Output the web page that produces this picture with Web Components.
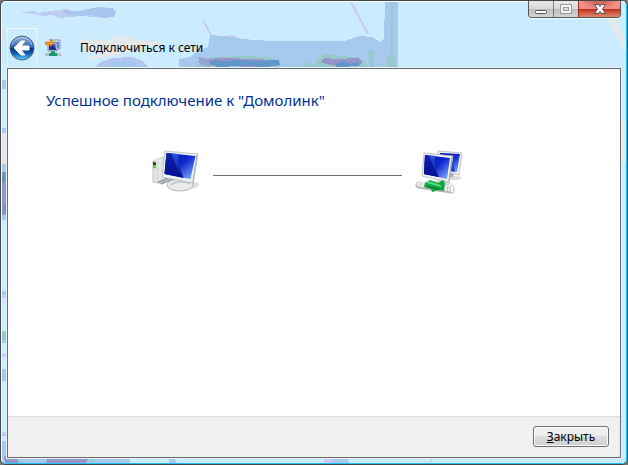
<!DOCTYPE html>
<html lang="ru">
<head>
<meta charset="utf-8">
<title>Подключиться к сети</title>
<style>
	body {
		margin: 0;
		background: #777;
		font-family: "Noto Sans", "Open Sans", sans-serif;
		font-size: 12px;
		color: #000;
	}
</style>
</head>
<body>
<aero-window>
	<wizard-header slot="header">Подключиться к сети</wizard-header>
	<connection-status>Успешное подключение к "Домолинк"</connection-status>
	<wizard-footer slot="footer"></wizard-footer>
</aero-window>

<script>
class BaseElement extends HTMLElement {
	constructor() {
		super()
		this.attachShadow({ mode: "open" })
		this.shadowRoot.innerHTML = this.template()
	}
}

// what shows through the glass frame
customElements.define('glass-backdrop',
	class extends BaseElement {
		template() {
			return `
			<style>
				:host { display: block; }
				svg { display: block; width: 100%; height: 100%; }
			</style>
			<svg viewBox="0 0 628 465" preserveAspectRatio="none" shape-rendering="crispEdges" aria-hidden="true">
				<rect width="628" height="465" fill="#cbebff"/>
				<path fill="#c0cbf4" d="M22 12l12-1 4 2 20-3 8-1 12 4 18-5 14 1 2 6-7 3-24-2-22 2-6-3-10 1-8-2-13-1z"/>
				<path fill="#a9c6ef" d="M63 10l16 1 19-4 14 1 4 4-2 5-10 1-12-3-14 1-12-2z"/>
				<path fill="#e6e7e8" d="M80 40l14-1 12 2 16-4 10 2 14 2 15 2 3 4-20-1-16 6-22 5-16 3-5-1 16-6-18-2-3-6zM107 40l12-4 11 1 3 5-10 1z"/>
				<path fill="#b5c5f2" d="M95 68l5-6 13-4 18-1 12 4 6 7z"/>
				<path fill="#a8c9ee" d="M103 68l5-5 14-3 16 3 4 5z"/>
				<path fill="#e0ddf0" d="M2 28l3 4v9l-3-3z"/>
				<path fill="#a8c9ee" d="M179 68v-9l11-2 6-6 12-4 2-12 26 2 6 2 29 2h74l14-5 13 1 8 5 4-3 1-37h13v66z"/>
				<path fill="#96c9cc" d="M196 68l5-8 12-3 38-1 22 2 8 3v7zM304 68l2-7 7 5 5-8 6-4 14 2 20 1 7 4 2 7zM368 50h6v18h-5zM386 68l2-13h6l2 13zM391 2h2v55h-2z"/>
				<path fill="#9794cb" d="M200 64l5-4 12-2 43 1 11 2v4l-12 2-40-1zM321 62l3-4 12 1 22-1 4 4-3 4-18 1-15-3z"/>
				<path fill="#6397cb" d="M206 63l8-3 12 1 12-1 16 1 25-1 1 5-12 2-27-1-24 1zM336 64l8-3 6 3 9-2v4l-23 1z"/>
				<path fill="#96a6cc" d="M198 57l10 2 3 8-11-2z"/>
				<path fill="none" stroke="#cbc9fb" stroke-width="2" d="M203 20l8 15M351 2l17 32M203 47l-6 4M229 36h6"/>
				<path fill="#e4e9ee" d="M605 16l9 0 13 27v13z"/>
				<!-- left edge -->
				<path fill="#a8c9ee" d="M2 80h5v9h-5zM2 128h5v5h-5zM2 164h5v56h-5zM2 291h5v6h-5zM2 331h5v12h-5zM2 369h5v12h-5zM2 433h5v3h-5zM2 441h5v14h-5z"/>
				<path fill="#e8e5ea" d="M2 134h5v30h-5z"/>
				<path fill="#9794cb" d="M2 172h5v43h-5z"/>
				<path fill="#6c96b4" d="M2 173h3v9h-3zM4 205h3v8h-3z"/>
				<path fill="#96c9cc" d="M2 332h5v8h-5z"/>
				<path fill="#cbc9fb" d="M2 295h5v3h-5zM2 354h5v3h-5zM2 432h5v2h-5z"/>
				<!-- bottom edge -->
				<path fill="#a8c9ee" d="M2 455h128v9H2zM168 458l6 0 4 6h-8zM332 458h15l3 6h-17z"/>
				<path fill="#9794cb" d="M4 456l11 2 6 6H5zM48 458h41l-4 6H46z"/>
				<path fill="#96c9cc" d="M17 458h3l2 6h-4zM89 458h6l-3 6h-3zM120 458h6l-2 2h-4z"/>
				<path fill="#cbc9fb" d="M323 458h9l1 6h-8zM430 458h2v4h-2z"/>
				<path fill="#e8eaed" d="M621 120h5v43h-5z"/>
			</svg>
			`
		}
	}
)

customElements.define('caption-buttons',
	class extends BaseElement {
		template() {
			return `
			<style>
				:host {
					display: flex;
					box-sizing: border-box;
					height: 17px;
					border: 1px solid #55585c;
					border-top: 0;
					border-radius: 0 0 4px 4px;
					box-shadow: 0 1px 0 #f4fbff;
					overflow: hidden;
				}
				button {
					display: flex;
					align-items: center;
					justify-content: center;
					width: 25px;
					padding: 0;
					border: 0;
					border-right: 1px solid #77797c;
					background: linear-gradient(#e8e8e8, #d8d8d8 50%, #bcbcbc 50%, #d4d4d4);
				}
				.close {
					width: 42px;
					border-right: 0;
					border-left: 1px solid #8c2a20;
					margin-left: -1px;
					background: radial-gradient(ellipse at 50% 0, #cf6a58 0 20%, transparent 70%) no-repeat top / 100% 50%,
						linear-gradient(#ff9a98, #f08a80 50%, #c02818 50%, #d06040 75%, #dc8868);
				}
				svg { display: block; }
			</style>
			<button type="button" aria-label="Свернуть">
				<svg width="12" height="12" viewBox="0 0 12 12"><rect x=".5" y="7.5" width="11" height="3" rx="1" fill="#fff" stroke="#505358"/></svg>
			</button>
			<button type="button" aria-label="Развернуть" disabled>
				<svg width="12" height="12" viewBox="0 0 12 12"><g stroke="#9b9b9b"><rect x=".5" y="1.5" width="11" height="9" fill="#f3f3f3"/><rect x="3.5" y="4.5" width="5" height="3" fill="#ddd"/></g></svg>
			</button>
			<button type="button" class="close" aria-label="Закрыть окно">
				<svg width="12" height="12" viewBox="0 0 12 12"><path d="M.5 1.5h4L6 3.500l1.500-2h4L8.500 6l3 4.500h-4L6 8.500l-1.500 2h-4L3.500 6z" fill="#fafafa" stroke="#5b4a53"/></svg>
			</button>
			`
		}
	}
)

customElements.define('wizard-header',
	class extends BaseElement {
		template() {
			return `
			<style>
				:host { display: block; }
				caption-buttons { margin-left: auto; width: max-content; }
				.nav {
					display: flex;
					align-items: center;
					height: 40px;
					padding-top: 10px;
				}
				.back {
					box-sizing: border-box;
					width: 30px;
					height: 40px;
					padding: 0;
					border: 1px dotted #fff;
					background: none;
				}
				.back svg { display: block; margin: auto; }
				.net { margin-left: 8px; }
				h1 {
					margin: 0 0 0 19px;
					font-size: 12px;
					line-height: 16px;
					font-weight: normal;
				}
			</style>
			<caption-buttons></caption-buttons>
			<div class="nav">
				<button type="button" class="back" aria-label="Назад">
					<svg width="26" height="26" viewBox="0 0 26 26">
						<defs>
							<linearGradient id="ball" x2="0" y2="1">
								<stop offset="0" stop-color="#8fb4de"/>
								<stop offset=".46" stop-color="#3468b5"/>
								<stop offset=".52" stop-color="#06318a"/>
								<stop offset=".75" stop-color="#1265b4"/>
								<stop offset="1" stop-color="#5fe0ff"/>
							</linearGradient>
						</defs>
						<circle cx="13" cy="13" r="12" fill="url(#ball)" stroke="#47617f"/>
						<path d="M3 10a10.500 10.500 0 0 1 20 0" fill="none" stroke="#d5e6f7" stroke-opacity=".6"/>
						<path d="M5 13l7-7h4l-4 5h8v4h-8l4 5h-4z" fill="#fff" stroke="#fff" stroke-linejoin="round"/>
					</svg>
				</button>
				<svg class="net" width="16" height="18" viewBox="0 0 16 18" aria-hidden="true">
					<path d="M6 1h9v9H6z" fill="#d2d8e2" stroke="#8994a8"/>
					<path d="M8 3h6v6H8z" fill="#5f86e0"/>
					<path d="M3 4h9v8H3z" fill="#dfe3ea" stroke="#7d8798"/>
					<path d="M4 5h7v6H4z" fill="#1730a4"/>
					<path d="M8 5h3v5z" fill="#5a86e8"/>
					<path d="M0 3h5V0l4 4-4 4V5.500H0z" fill="#f79a1d" stroke="#b56a18" stroke-width=".5"/>
					<path d="M6 12h4v3H6z" fill="#2b9a70"/>
					<path d="M0 14h16v3H0z" fill="#b5c2c2"/>
					<path d="M4 14h8v3H4z" fill="#159a69"/>
				</svg>
				<h1><slot></slot></h1>
			</div>
			`
		}
	}
)

const SCREEN_DEFS = `
	<defs>
		<linearGradient id="lcd" x2="1" y2="1">
			<stop offset="0" stop-color="#0810a0"/>
			<stop offset=".5" stop-color="#1028d0"/>
			<stop offset="1" stop-color="#8cc0ff"/>
		</linearGradient>
		<linearGradient id="shine" x2="0" y2="1">
			<stop offset="0" stop-color="#2a58e0"/>
			<stop offset="1" stop-color="#040c88"/>
		</linearGradient>
		<linearGradient id="metal">
			<stop offset="0" stop-color="#fafafa"/>
			<stop offset="1" stop-color="#cfd2d3"/>
		</linearGradient>
	</defs>`

customElements.define('computer-icon',
	class extends BaseElement {
		template() {
			return `
			<style>
				:host { display: block; }
				svg { display: block; }
			</style>
			<svg width="48" height="48" viewBox="0 0 48 48" aria-hidden="true">
				${SCREEN_DEFS}
				<ellipse cx="36" cy="38" rx="11" ry="4" fill="#dedede"/>
				<path d="M1 14l10-4 5 1v22L6 36l-5-1z" fill="url(#metal)" stroke="#c2c2c2" stroke-width=".7"/>
				<path d="M1 14l5 1v21l-5-1z" fill="#e2e4e4" stroke="#b4b7b6" stroke-width=".5"/>
				<path d="M1 15l3 .5v3L1 18z" fill="#303433"/>
				<path d="M1 18l3 .5v3L1 21z" fill="#54d51f"/>
				<path d="M6 35l12-5 5 1-13 6z" fill="#d0d2d4" stroke="#74777b" stroke-width=".7"/>
				<path d="M8 35l11-4M10 36l11-4" stroke="#888c90" stroke-width=".7"/>
				<path d="M26 31l9 3-2 5h-8z" fill="#b7babb"/>
				<ellipse cx="28" cy="38" rx="13" ry="6" fill="#e9eaea" stroke="#b2b5b6"/>
				<path d="M19 38c4-4 15-5 19-1" fill="none" stroke="#c4c7c9" stroke-width="2"/>
				<path d="M13 4l33 3-5 29-31-6z" fill="#edf0f0" stroke="#b4babc" stroke-width=".8"/>
				<path d="M45 8l-4 27" stroke="#a4aaab"/>
				<path d="M14.500 6l29 3-5 23-26-5z" fill="url(#lcd)"/>
				<path d="M14.500 6l13 1c-3 6 0 12 4 24l-19-4z" fill="url(#shine)"/>
				<path d="M14.500 6l5 .5 9 23-16-3z" fill="#060e94" fill-opacity=".7"/>
			</svg>
			`
		}
	}
)

customElements.define('network-icon',
	class extends BaseElement {
		template() {
			return `
			<style>
				:host { display: block; }
				svg { display: block; }
			</style>
			<svg width="48" height="48" viewBox="0 0 48 48" aria-hidden="true">
				${SCREEN_DEFS}
				<ellipse cx="38" cy="31" rx="9" ry="2" fill="#dcdcdc"/>
				<path d="M33 24l6 2-1 4h-5z" fill="#a9adaf"/>
				<path d="M23 4l24 2-3 22-23-5z" fill="#eef0f0" stroke="#b3b8b9" stroke-width=".8"/>
				<path d="M25 6l20 1-3 18-19-3z" fill="url(#lcd)"/>
				<path d="M25 6l10 1 5 18-17-3z" fill="#0a1ab4" fill-opacity=".7"/>
				<ellipse cx="27" cy="36" rx="9" ry="3" fill="#d4d7d7"/>
				<path d="M9 6l29 3-4 26-27-6z" fill="#f0f2f2" stroke="#b0b6b7" stroke-width=".8"/>
				<path d="M37 10l-3 24" stroke="#a0a7a9"/>
				<path d="M10 8l25 3-3 21-23-5z" fill="url(#lcd)"/>
				<path d="M10 8l11 1c-3 7-1 12 3 21L9 27z" fill="url(#shine)"/>
				<path d="M10 8l4 .5 8 21L9 27z" fill="#060e94" fill-opacity=".7"/>
				<path d="M4 38l32 5" stroke="#b4b7b7" stroke-width="7" stroke-linecap="round"/>
				<path d="M4 37l32 5" stroke="#ececeb" stroke-width="5" stroke-linecap="round"/>
				<path d="M6 35l-1 4M33 39l-1 6" stroke="#c2c5c4"/>
				<path d="M10 36l5-3 8 3 5-3 2 3-1 8-5-1-7 2-1-3-7-2z" fill="#12a344"/>
				<path d="M12 35l14 4" stroke="#4fe080" stroke-width="2"/>
				<path d="M12 40l13 2" stroke="#08742f"/>
				<ellipse cx="37" cy="42" rx="2" ry="4" fill="#f9f9f9" stroke="#bbb" stroke-width=".8"/>
			</svg>
			`
		}
	}
)

customElements.define('connection-status',
	class extends BaseElement {
		template() {
			return `
			<style>
				:host {
					display: block;
					padding: 20px 38px;
				}
				h2 {
					margin: 0;
					font-size: 15px;
					line-height: 22px;
					font-weight: normal;
					color: #003399;
				}
				.link {
					display: flex;
					gap: 13px;
					margin-top: 36px;
					padding: 0 119px 0 106px;
				}
				/* the line meets the monitors' stands, below the icon centre */
				.line {
					flex: 1;
					height: 28px;
					border-bottom: 1px solid #6e6e6e;
				}
			</style>
			<h2><slot></slot></h2>
			<div class="link">
				<computer-icon></computer-icon>
				<div class="line"></div>
				<network-icon></network-icon>
			</div>
			`
		}
	}
)

customElements.define('wizard-footer',
	class extends BaseElement {
		template() {
			return `
			<style>
				:host {
					display: flex;
					justify-content: flex-end;
					padding: 9px 11px 10px;
					border-top: 1px solid #dfdfdf;
					background: #f0f0f0;
				}
				button {
					box-sizing: border-box;
					min-width: 76px;
					height: 21px;
					padding: 0 8px;
					border: 1px solid #707070;
					border-radius: 3px;
					box-shadow: inset 0 0 0 1px #fcfcfc;
					background: linear-gradient(#f2f2f2, #ebebeb 50%, #dddddd 50%, #cfcfcf);
					font: inherit;
					line-height: 16px;
					color: #000;
				}
			</style>
			<button type="button" accesskey="з"><u>З</u>акрыть</button>
			`
		}
	}
)

customElements.define('aero-window',
	class extends BaseElement {
		template() {
			return `
			<style>
				:host {
					position: relative;
					display: flex;
					flex-direction: column;
					box-sizing: border-box;
					min-height: 100vh;
					padding: 0 6px 6px;
					border: 1px solid #42474b;
					border-radius: 6px;
					overflow: hidden;
				}
				glass-backdrop {
					position: absolute;
					inset: -1px;
				}
				.edge {
					position: absolute;
					inset: 0;
					border: 1px solid;
					border-color: #fff #00c8ff #20c0f8 #f2faff;
					border-radius: 5px;
					pointer-events: none;
				}
				header, main { position: relative; }
				main {
					flex: 1;
					display: flex;
					flex-direction: column;
					border: 1px solid #6b6b6b;
					box-shadow: 0 0 0 1px #e4f5ff;
					background: #fff;
				}
				.content { flex: 1; }
			</style>
			<glass-backdrop></glass-backdrop>
			<div class="edge"></div>
			<header><slot name="header"></slot></header>
			<main>
				<div class="content"><slot></slot></div>
				<slot name="footer"></slot>
			</main>
			`
		}
	}
)
</script>
</body>
</html>
